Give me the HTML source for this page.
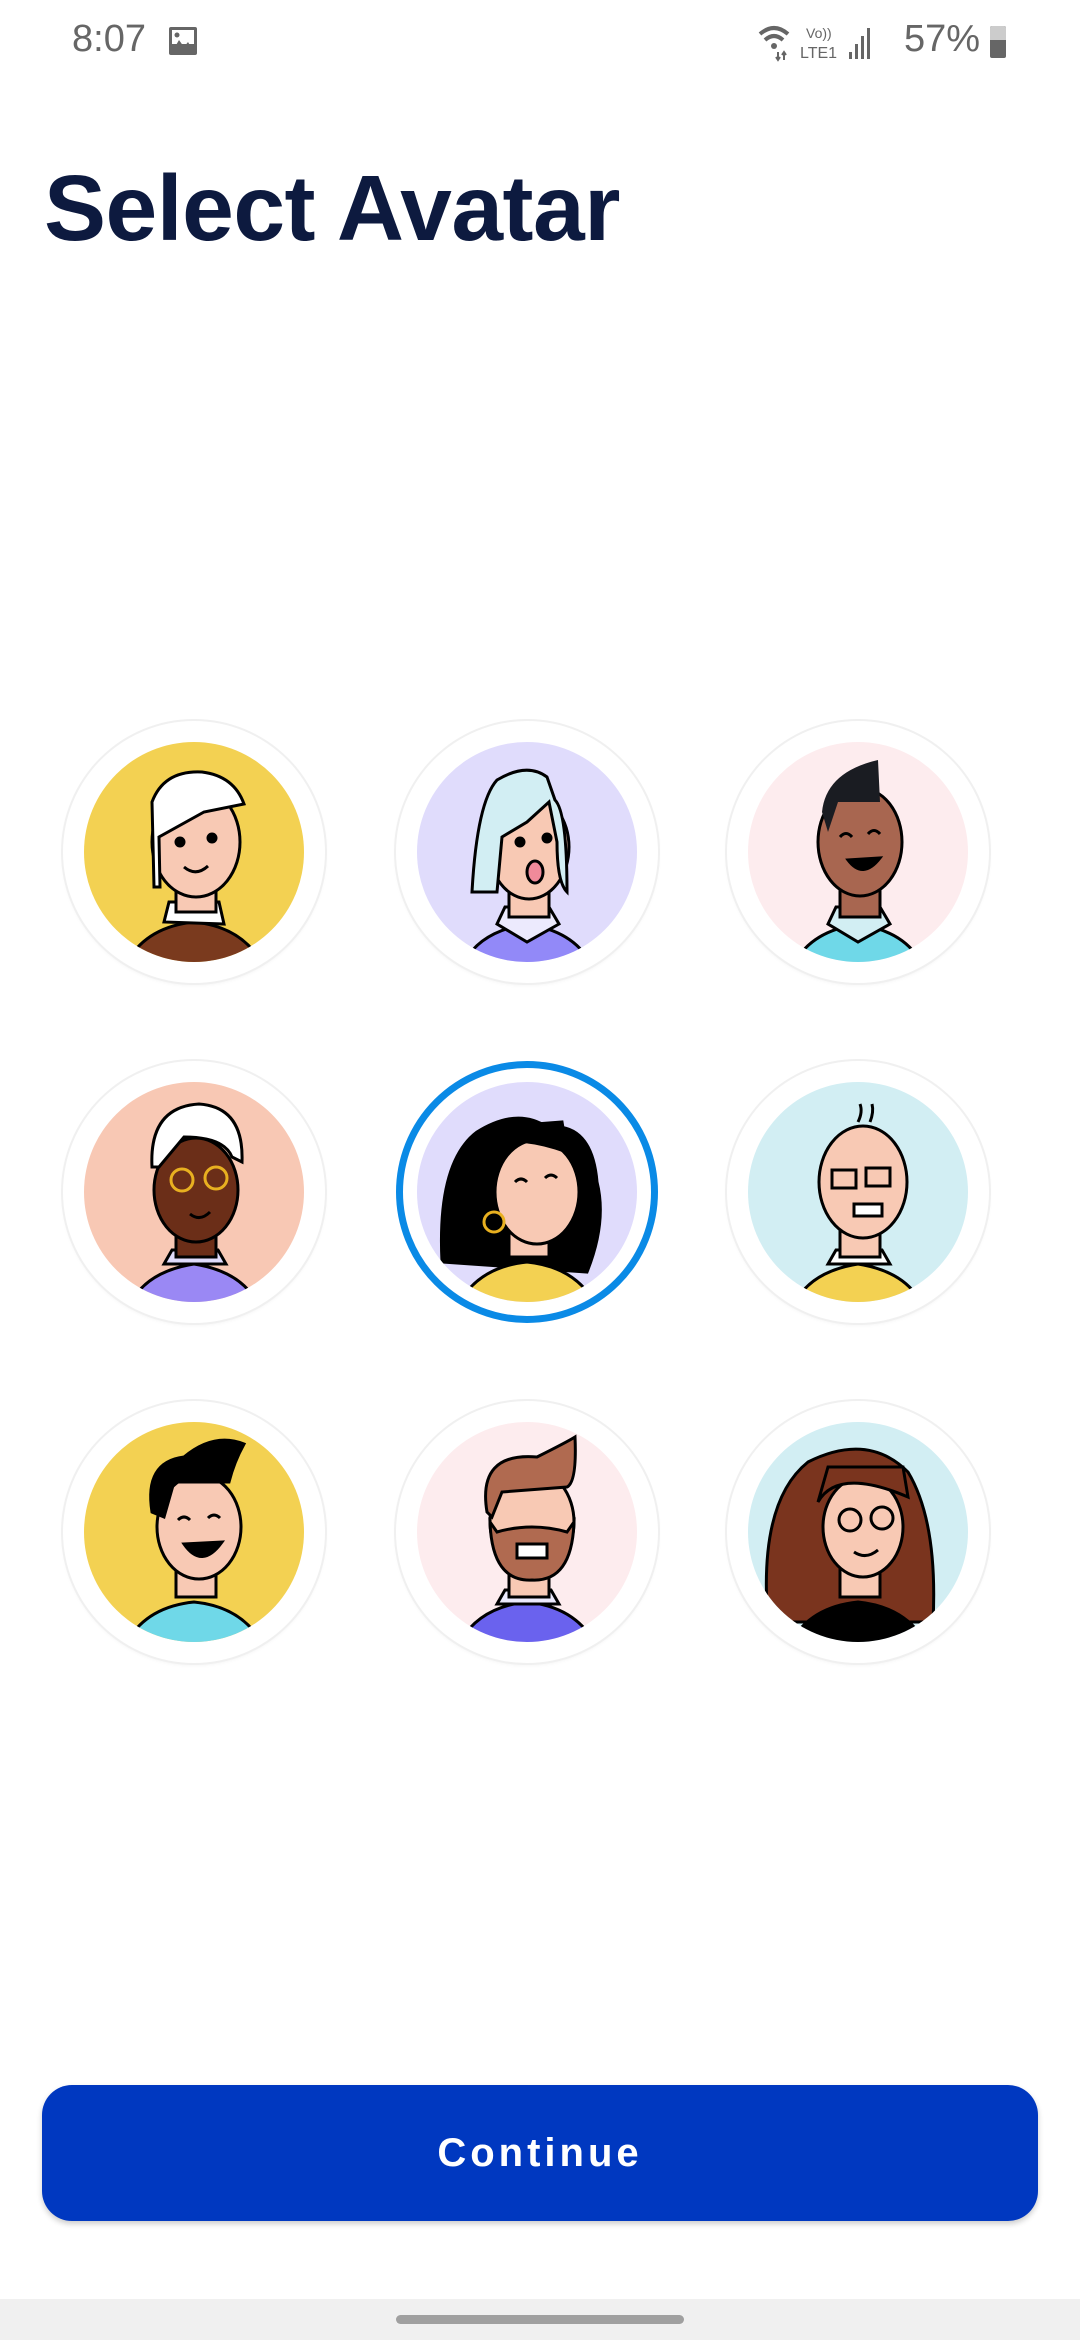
<!DOCTYPE html>
<html><head><meta charset="utf-8"><style>
*{margin:0;padding:0;box-sizing:border-box}
body{width:1080px;height:2340px;background:#fff;position:relative;overflow:hidden;font-family:"Liberation Sans",sans-serif}
.sb{position:absolute;top:0;left:0;width:1080px;height:90px;color:#666}
.title{position:absolute;left:44px;top:158px;font-size:93px;font-weight:bold;color:#0d1a3f;letter-spacing:-0.5px;line-height:100px}
.av{position:absolute;width:262px;height:262px;border-radius:50%;background:#fff;box-shadow:0 0 0 2px #f0f0f0,0 2px 4px rgba(0,0,0,0.06)}
.av svg{position:absolute;left:21px;top:21px;width:220px;height:220px}
.sel{box-shadow:none;border:7px solid #0a8ae6}
.sel svg{left:14px;top:14px}
.btn{position:absolute;left:42px;top:2085px;width:996px;height:136px;border-radius:30px;background:#0038c0;color:#fff;font-weight:bold;font-size:40px;letter-spacing:4px;text-align:center;line-height:136px;box-shadow:0 3px 6px rgba(0,0,0,0.2)}
.nav{position:absolute;left:0;top:2299px;width:1080px;height:41px;background:#f0f0f0}
.nav div{position:absolute;left:396px;top:16px;width:288px;height:9px;border-radius:5px;background:#a0a0a0}
</style></head><body>
<div class="sb">
<div style="position:absolute;left:72px;top:18px;font-size:38px;color:#666">8:07</div>
<svg style="position:absolute;left:168px;top:26px" width="30" height="30" viewBox="0 0 30 30"><rect x="1" y="1" width="28" height="28" rx="2" fill="#666"/><rect x="4" y="4" width="22" height="14" fill="#fff"/><circle cx="9" cy="9" r="2.5" fill="#666"/><path d="M4 26 L11 14 L16 21 L20 16 L26 26Z" fill="#666"/></svg>
<svg style="position:absolute;left:756px;top:22px" width="120" height="40" viewBox="0 0 120 40"><path d="M4 12 Q18 0 32 12" stroke="#666" stroke-width="4" fill="none"/><path d="M9 18 Q18 10 27 18" stroke="#666" stroke-width="4" fill="none"/><circle cx="18" cy="24" r="3" fill="#666"/><path d="M22 30 v8 M20 35 l2 3 l2-3 M28 38 v-8 M26 33 l2-3 l2 3" stroke="#666" stroke-width="2" fill="none"/><text x="50" y="16" font-size="14" fill="#666" font-family="Liberation Sans">Vo))</text><text x="44" y="36" font-size="16" fill="#666" font-family="Liberation Sans">LTE1</text><rect x="93" y="30" width="3" height="7" fill="#666"/><rect x="99" y="22" width="3" height="15" fill="#666"/><rect x="105" y="14" width="3" height="23" fill="#666"/><rect x="111" y="6" width="3" height="31" fill="#666"/></svg>
<div style="position:absolute;left:904px;top:18px;font-size:38px;color:#666">57%</div>
<div style="position:absolute;left:990px;top:26px;width:16px;height:32px;background:#666;border-radius:2px"></div>
<div style="position:absolute;left:990px;top:26px;width:16px;height:14px;background:#ccc;border-radius:2px 2px 0 0"></div>
</div>
<div class="title">Select Avatar</div>

<!-- row 1 -->
<div class="av" style="left:63px;top:721px"><svg viewBox="0 0 220 220"><defs><clipPath id="c"><circle cx="110" cy="110" r="110"/></clipPath></defs><g clip-path="url(#c)" stroke="#000" stroke-width="3"><rect width="220" height="220" fill="#f3d152" stroke="none"/><path d="M40 225 Q60 185 110 180 Q160 185 180 225Z" fill="#7a3a1e"/><path d="M80 180 L85 160 L135 160 L140 182Z" fill="#fff"/><rect x="92" y="130" width="40" height="40" fill="#f8c9b4"/><ellipse cx="112" cy="100" rx="44" ry="55" fill="#f8c9b4"/><path d="M70 145 L68 60 Q80 28 118 30 Q150 34 160 62 L120 70 L75 95 L76 145Z" fill="#fff"/><circle cx="96" cy="100" r="4" fill="#000"/><circle cx="128" cy="96" r="4" fill="#000"/><path d="M100 125 Q112 135 124 124" fill="none"/></g></svg></div>
<div class="av" style="left:396px;top:721px"><svg viewBox="0 0 220 220"><g clip-path="url(#c)" stroke="#000" stroke-width="3"><rect width="220" height="220" fill="#e0dcfc" stroke="none"/><path d="M45 225 Q60 190 110 182 Q160 190 175 225Z" fill="#9289f8"/><path d="M80 182 L88 165 L132 165 L142 182 L110 200Z" fill="#eceafd"/><rect x="92" y="130" width="40" height="45" fill="#f8c9b4"/><ellipse cx="112" cy="105" rx="40" ry="52" fill="#f8c9b4"/><path d="M55 150 Q60 60 80 38 Q110 20 130 35 L138 58 Q150 70 150 150 Q140 140 140 100 L132 60 L110 80 L85 95 L80 150Z" fill="#d2eef3"/><circle cx="103" cy="100" r="4" fill="#000"/><circle cx="130" cy="96" r="4" fill="#000"/><ellipse cx="118" cy="130" rx="8" ry="11" fill="#f08a9a"/></g></svg></div>
<div class="av" style="left:727px;top:721px"><svg viewBox="0 0 220 220"><g clip-path="url(#c)" stroke="#000" stroke-width="3"><rect width="220" height="220" fill="#fdecee" stroke="none"/><path d="M45 225 Q60 190 110 182 Q160 190 175 225Z" fill="#6fd8e8"/><path d="M80 182 L88 165 L132 165 L142 182 L110 200Z" fill="#d2eef3"/><rect x="92" y="130" width="40" height="45" fill="#a86650"/><ellipse cx="112" cy="100" rx="42" ry="54" fill="#a86650"/><path d="M74 70 Q78 30 130 18 L132 60 L90 60 L80 90Z" fill="#1a1c22" stroke="none"/><path d="M92 95 Q98 88 104 95 M120 92 Q126 85 132 92" fill="none"/><path d="M100 118 Q115 138 132 116Z" fill="#000"/></g></svg></div>

<!-- row 2 -->
<div class="av" style="left:63px;top:1061px"><svg viewBox="0 0 220 220"><g clip-path="url(#c)" stroke="#000" stroke-width="3"><rect width="220" height="220" fill="#f8c8b4" stroke="none"/><path d="M45 225 Q60 190 110 182 Q160 190 175 225Z" fill="#9a88f4"/><path d="M80 182 L88 168 L134 168 L142 182Z" fill="#e0dcfc"/><rect x="92" y="130" width="40" height="45" fill="#6b2e18"/><ellipse cx="112" cy="108" rx="42" ry="52" fill="#6b2e18"/><path d="M68 85 Q65 25 115 22 Q160 25 158 80 L148 75 Q140 55 100 55 L75 85Z" fill="#fff"/><circle cx="98" cy="98" r="11" fill="none" stroke="#e8b020"/><circle cx="132" cy="96" r="11" fill="none" stroke="#e8b020"/><path d="M106 132 Q116 140 126 130" fill="none"/></g></svg></div>
<div class="av sel" style="left:396px;top:1061px"><svg viewBox="0 0 220 220"><g clip-path="url(#c)" stroke="#000" stroke-width="3"><rect width="220" height="220" fill="#e0dcfc" stroke="none"/><path d="M25 180 Q20 80 60 50 Q100 25 130 45 Q175 40 180 100 Q190 140 170 190Z" fill="#000"/><path d="M40 225 Q60 185 110 180 Q160 185 180 225Z" fill="#f3d152"/><rect x="92" y="130" width="40" height="45" fill="#f8c9b4"/><ellipse cx="120" cy="110" rx="42" ry="52" fill="#f8c9b4"/><path d="M75 60 Q110 55 150 70 L145 40 L80 45Z" fill="#000"/><path d="M98 100 Q104 94 110 100 M128 96 Q134 90 140 96" fill="none"/><circle cx="77" cy="140" r="10" fill="none" stroke="#e8b020"/></g></svg></div>
<div class="av" style="left:727px;top:1061px"><svg viewBox="0 0 220 220"><g clip-path="url(#c)" stroke="#000" stroke-width="3"><rect width="220" height="220" fill="#d2eef3" stroke="none"/><path d="M45 225 Q60 190 110 182 Q160 190 175 225Z" fill="#f3d152"/><path d="M80 182 L88 168 L134 168 L142 182Z" fill="#fff"/><rect x="92" y="130" width="40" height="45" fill="#f8c9b4"/><ellipse cx="115" cy="100" rx="44" ry="56" fill="#f8c9b4"/><rect x="84" y="88" width="24" height="18" fill="none"/><rect x="118" y="86" width="24" height="18" fill="none"/><rect x="106" y="122" width="28" height="12" fill="#fff"/><path d="M110 40 Q115 30 112 22 M122 40 Q126 30 124 22" fill="none"/></g></svg></div>

<!-- row 3 -->
<div class="av" style="left:63px;top:1401px"><svg viewBox="0 0 220 220"><g clip-path="url(#c)" stroke="#000" stroke-width="3"><rect width="220" height="220" fill="#f3d152" stroke="none"/><path d="M40 225 Q60 185 110 180 Q160 185 180 225Z" fill="#6fd8e8"/><rect x="92" y="130" width="40" height="45" fill="#f8c9b4"/><ellipse cx="115" cy="105" rx="42" ry="52" fill="#f8c9b4"/><path d="M68 90 Q60 40 100 35 Q130 10 160 22 Q150 40 145 60 L90 60 L80 95Z" fill="#000"/><path d="M94 98 Q100 92 106 98 M124 96 Q130 90 136 96" fill="none"/><path d="M100 122 Q118 148 138 120Z" fill="#000"/></g></svg></div>
<div class="av" style="left:396px;top:1401px"><svg viewBox="0 0 220 220"><g clip-path="url(#c)" stroke="#000" stroke-width="3"><rect width="220" height="220" fill="#fdecee" stroke="none"/><path d="M40 225 Q60 185 110 180 Q160 185 180 225Z" fill="#6a62ee"/><path d="M80 182 L88 168 L134 168 L142 182Z" fill="#eceafd"/><rect x="92" y="130" width="40" height="45" fill="#f8c9b4"/><ellipse cx="115" cy="100" rx="42" ry="52" fill="#f8c9b4"/><path d="M73 100 Q75 160 115 158 Q155 160 157 100 L150 110 Q115 100 80 110Z" fill="#b06a50"/><path d="M70 90 Q60 30 120 35 Q150 20 158 15 Q160 60 150 65 L85 70 L75 95Z" fill="#b06a50"/><rect x="100" y="122" width="30" height="14" fill="#fff"/></g></svg></div>
<div class="av" style="left:727px;top:1401px"><svg viewBox="0 0 220 220"><g clip-path="url(#c)" stroke="#000" stroke-width="3"><rect width="220" height="220" fill="#d2eef3" stroke="none"/><path d="M20 200 Q10 80 60 40 Q120 10 160 50 Q190 100 185 200Z" fill="#7a341e"/><path d="M40 225 Q60 185 110 180 Q160 185 180 225Z" fill="#000"/><rect x="92" y="130" width="40" height="45" fill="#f8c9b4"/><ellipse cx="115" cy="105" rx="40" ry="50" fill="#f8c9b4"/><path d="M70 80 Q90 45 160 75 L155 45 L80 45Z" fill="#7a341e"/><circle cx="102" cy="98" r="11" fill="none"/><circle cx="134" cy="96" r="11" fill="none"/><path d="M106 130 Q118 138 130 128" fill="none"/></g></svg></div>

<div class="btn">Continue</div>
<div class="nav"><div></div></div>
</body></html>
